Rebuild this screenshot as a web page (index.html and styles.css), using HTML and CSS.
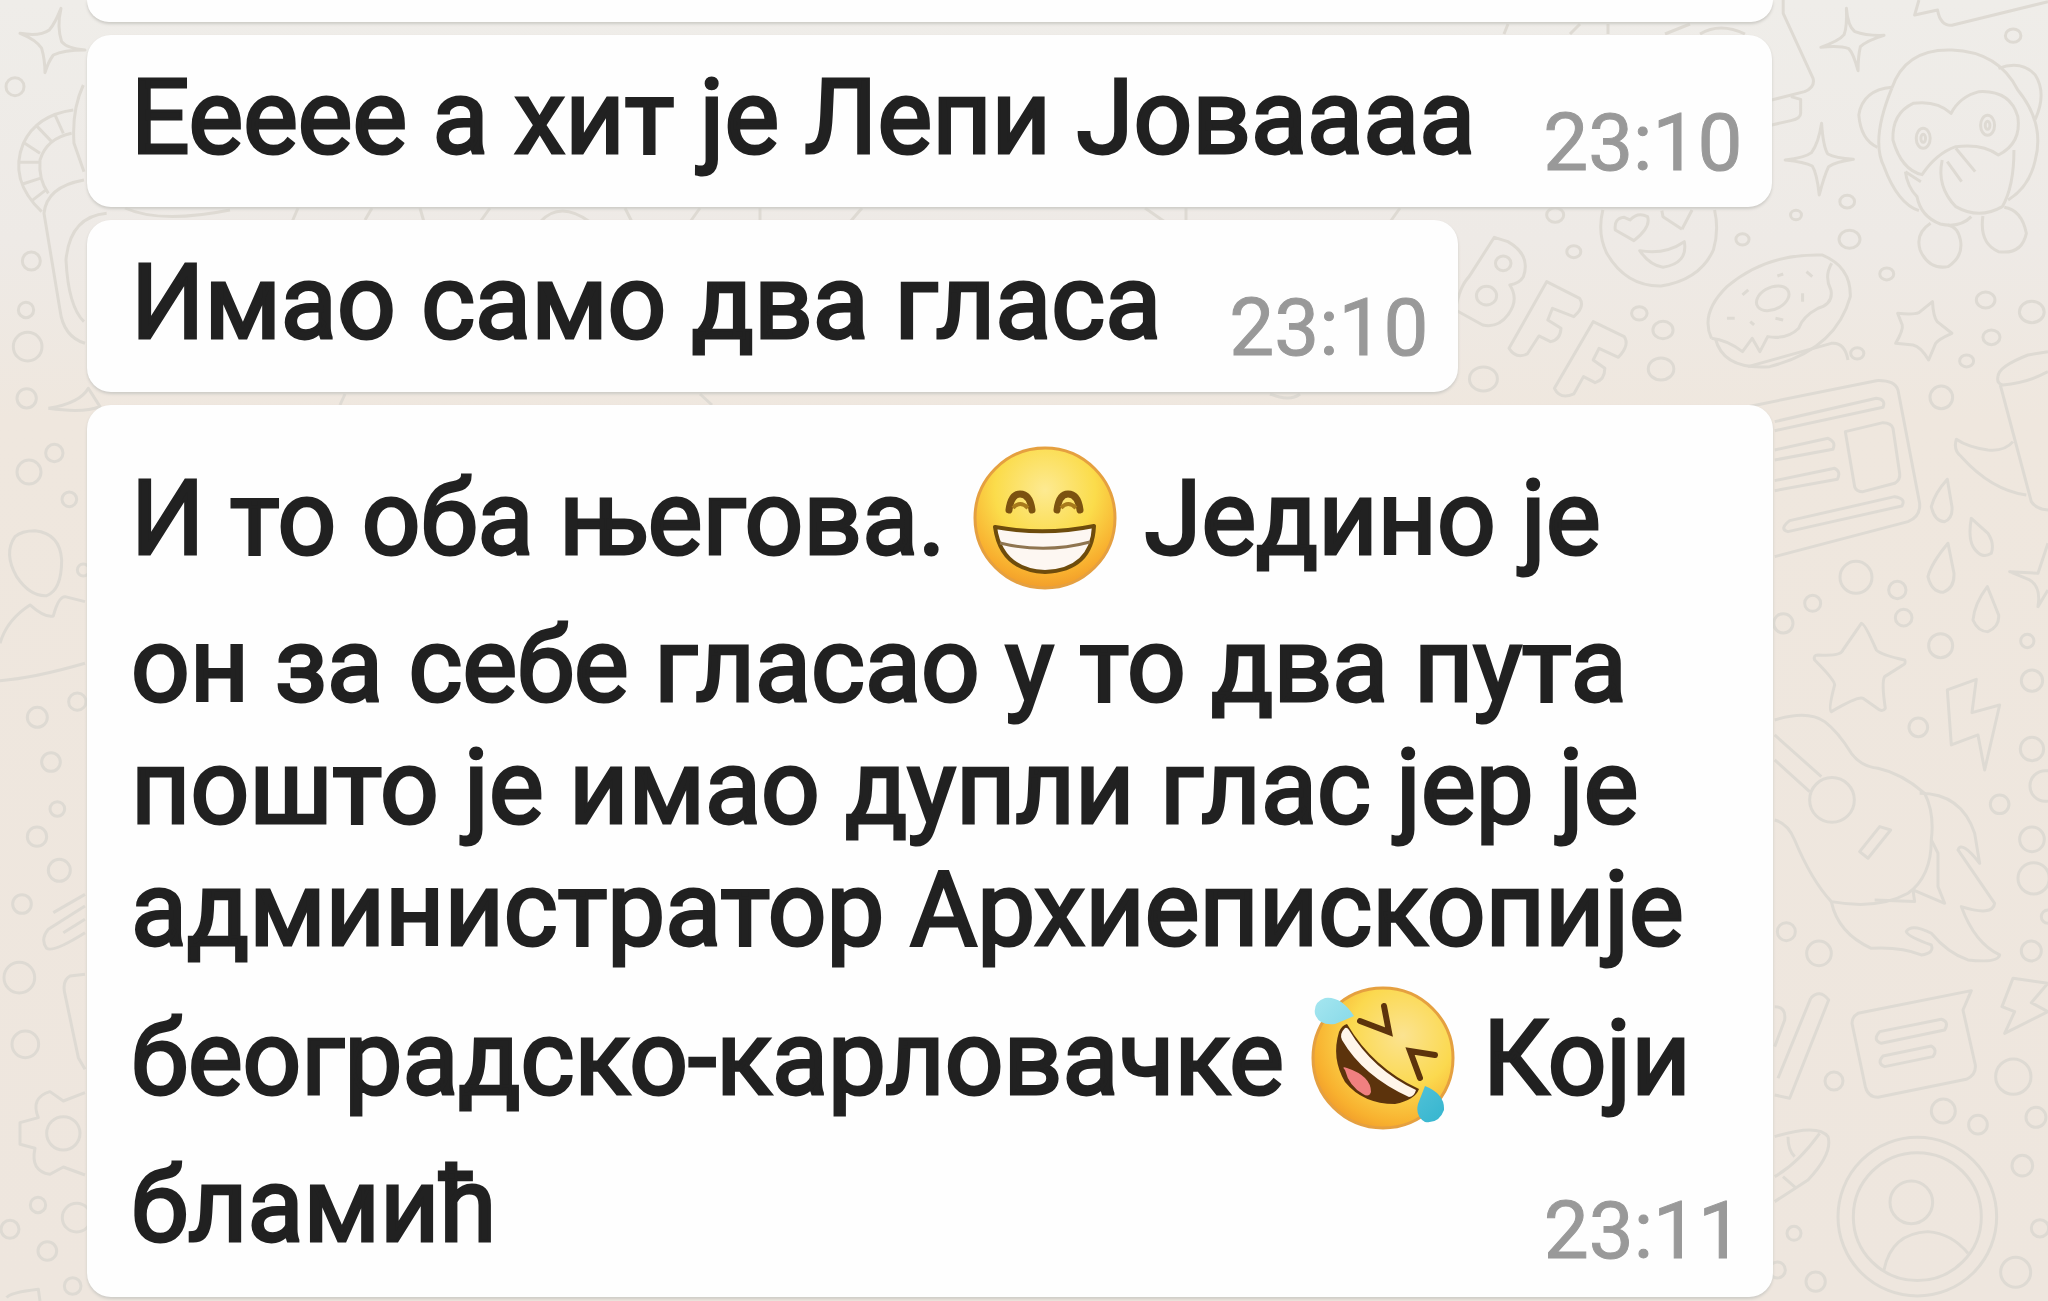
FILE: index.html
```html
<!DOCTYPE html>
<html lang="sr">
<head>
    <meta charset="UTF-8">
    <meta name="viewport" content="width=device-width, initial-scale=1.0">
    <title>Chat</title>
    <link rel="stylesheet" href="styles.css">
</head>
<body>
    <svg class="wallpaper" viewBox="0 0 2048 1301" preserveAspectRatio="xMaxYMin slice" aria-hidden="true">
        <!-- top right: stars, monkey, face, letters, donut -->
        <g transform="translate(1440 0) scale(.3878 .3333)">
            <path d="M885 0V40L962 235Q968 262 940 275L855 300M905 290L930 298V340Q930 356 905 362L855 375"/>
            <path d="M1048 25Q1052 80 1070 95Q1100 108 1145 106Q1100 122 1084 140Q1078 170 1078 212Q1066 160 1054 146Q1030 136 982 142Q1030 122 1042 104Q1050 80 1048 25Z"/>
            <path d="M984 370Q988 440 1000 462Q1020 474 1066 478Q1020 486 1002 500Q990 530 978 585Q972 520 960 498Q940 486 890 480Q940 474 958 458Q976 430 984 370Z"/>
            <path d="M1235 0L1224 45L1283 30Q1290 78 1320 76L1568 5"/>
            <path d="M1165 265Q1200 145 1320 150Q1440 155 1490 270Q1560 370 1535 480Q1520 560 1465 600M1165 265Q1110 420 1145 500Q1180 610 1235 632"/>
            <path d="M1165 262Q1090 270 1080 345Q1085 420 1128 442M1440 205Q1500 180 1535 225Q1565 280 1535 358"/>
            <path d="M1318 340Q1280 300 1220 310Q1165 340 1168 420Q1190 510 1243 524Q1280 460 1330 440Q1400 430 1440 465Q1500 430 1490 350Q1470 270 1390 275Q1340 290 1318 340Z"/>
            <ellipse cx="1246" cy="415" rx="18" ry="30"/><ellipse cx="1412" cy="376" rx="18" ry="30"/>
            <ellipse cx="1246" cy="415" rx="6" ry="12"/><ellipse cx="1412" cy="376" rx="6" ry="12"/>
            <path d="M1200 515Q1205 560 1230 590Q1240 650 1290 672Q1340 685 1370 650M1200 515L1240 545M1295 480Q1280 560 1330 620Q1390 660 1450 620Q1480 560 1480 450M1330 445L1380 515M1308 485L1345 545"/>
            <path d="M1265 670Q1225 700 1238 750Q1260 810 1310 800Q1350 770 1342 720Q1335 680 1310 675M1400 648Q1390 730 1440 755Q1500 765 1512 700Q1500 630 1455 622"/>
            <path d="M420 630Q405 700 430 760Q480 860 570 858Q670 840 705 750Q720 690 708 630"/>
            <path d="M500 722L452 690Q448 655 475 652L490 660Q510 635 535 650Q545 680 500 722ZM624 688L575 650L572 632M624 688L650 630M515 752Q580 765 630 725Q640 790 575 802Q540 795 515 752Z"/>
            <path d="M140 712L175 725Q235 765 215 830Q205 850 180 855Q205 900 175 945Q150 985 110 975L40 930Q50 860 75 830Z"/>
            <ellipse cx="163" cy="790" rx="20" ry="22"/><ellipse cx="120" cy="887" rx="26" ry="28"/>
            <path d="M275 845L360 895Q375 920 345 950L290 925L278 960L312 985Q310 1020 285 1025L255 1008L225 1062Q195 1078 178 1045Z"/>
            <path d="M395 965L475 1010Q490 1035 460 1072L410 1045L395 1080L425 1105Q425 1140 400 1148L370 1130L345 1182Q310 1200 295 1165Z"/>
            <path d="M700 1015Q670 940 740 860Q840 760 985 765Q1060 800 1058 890Q1020 1050 850 1100Q730 1110 710 1015"/>
            <path d="M1010 790Q990 830 1008 870Q1015 910 975 925Q935 950 925 985Q895 1020 845 1010L825 1055L805 1015L780 1055Q740 1020 700 1015"/>
            <ellipse cx="858" cy="895" rx="46" ry="32" transform="rotate(-35 858 895)"/>
            <path d="M780 885L795 870M870 828L885 822M945 815L960 830M935 880V905M865 955L885 960M740 955H760M800 965L810 975"/>
            <path d="M1270 905Q1272 950 1282 965L1320 1000Q1285 1018 1278 1030L1260 1080Q1240 1040 1220 1035L1175 1030Q1195 990 1192 975L1180 940Q1220 945 1235 938Z"/>
            <circle cx="1478" cy="107" r="20"/><circle cx="1050" cy="605" r="19"/><circle cx="918" cy="645" r="14"/>
            <circle cx="1056" cy="718" r="27"/><circle cx="780" cy="718" r="17"/><circle cx="345" cy="755" r="18"/>
            <circle cx="1152" cy="822" r="18"/><circle cx="1407" cy="900" r="24"/><circle cx="1422" cy="1012" r="22"/>
            <circle cx="1526" cy="936" r="32"/><circle cx="1358" cy="1083" r="18"/><circle cx="1076" cy="1060" r="17"/>
            <circle cx="514" cy="940" r="20"/><circle cx="575" cy="990" r="26"/><circle cx="570" cy="1107" r="33"/>
            <circle cx="112" cy="1137" r="36"/><circle cx="297" cy="645" r="22"/>
        </g>
        <!-- right middle: newspaper, cup, drops, star, bolt, guitar -->
        <g transform="translate(1748 360) scale(.3333)">
            <path d="M0 140L385 62Q440 60 450 90L515 430Q518 470 480 485L80 590M0 20L250 -50Q290 -55 300 0"/>
            <path d="M80 185L385 115Q415 118 405 142L80 212M80 270L240 235Q265 245 255 268L80 300M80 362L260 325Q280 335 268 358L80 392M125 482L440 410Q475 415 462 438L120 515Q92 508 125 482Z"/>
            <path d="M292 215L405 188Q430 188 435 205L455 340Q458 360 440 370L345 395Q325 395 320 380Z"/>
            <path d="M750 50Q750 20 840 -15L900 -25M750 50Q745 70 765 75Q840 68 900 35M757 75L850 425Q865 448 900 450M795 245Q770 275 720 270Q660 262 625 238Q615 270 640 290Q730 390 835 405"/>
            <path d="M598 358Q560 400 550 440Q560 485 590 485Q615 475 612 440ZM670 475Q660 530 675 560Q700 600 730 580Q740 550 720 520ZM600 550Q550 610 540 650Q550 695 585 697Q620 685 618 640ZM718 680Q680 730 675 780Q690 815 720 815Q755 800 752 765Z"/>
            <path d="M340 790Q350 790 385 870Q400 885 470 900Q475 910 465 915L410 950Q400 965 412 1045Q405 1055 395 1050L345 1015Q330 1008 250 1055Q240 1050 260 975Q260 960 200 900Q195 885 210 885Q280 890 285 870Z"/>
            <path d="M598 990L685 958L672 1058L755 1035L710 1230L690 1125L610 1155ZM900 550L870 640L785 635L845 660Q880 680 870 740L900 690"/>
            <path d="M80 1080Q180 1050 230 1085Q270 1115 310 1180Q340 1220 390 1225Q460 1240 530 1300Q560 1360 550 1440Q550 1550 480 1600Q390 1650 250 1625Q190 1560 140 1440Q120 1390 80 1380"/>
            <path d="M80 1125L220 1250M80 1200L185 1295M515 1300Q640 1300 680 1420L695 1510Q640 1440 630 1470L740 1630Q735 1670 640 1640Q680 1750 755 1785Q750 1810 660 1800Q600 1780 550 1720Q490 1690 475 1715Q480 1730 550 1755Q560 1780 520 1785Q460 1760 370 1765Q270 1720 250 1625"/>
            <path d="M380 1620L500 1625L495 1590L590 1630L570 1580V1480L550 1440M395 1400L428 1410L360 1495L335 1475Z"/>
            <circle cx="252" cy="1320" r="67"/><circle cx="580" cy="112" r="34"/>
            <circle cx="324" cy="652" r="48"/><circle cx="448" cy="690" r="26"/><circle cx="467" cy="773" r="25"/>
            <circle cx="194" cy="730" r="24"/><circle cx="106" cy="790" r="29"/><circle cx="578" cy="857" r="36"/>
            <circle cx="838" cy="843" r="20"/><circle cx="852" cy="962" r="32"/><circle cx="511" cy="1102" r="28"/>
            <circle cx="852" cy="1167" r="35"/><circle cx="892" cy="1278" r="46"/><circle cx="755" cy="1333" r="28"/>
        </g>
        <!-- right bottom: chat card, bolt, contact badge -->
        <g transform="translate(1748 820) scale(.3333)">
            <path d="M330 580L670 512L645 570L682 735Q685 765 655 778L390 832Q360 832 352 800L312 610Q312 590 330 580Z"/>
            <path d="M395 635L580 598Q605 605 590 630L400 670Q372 660 395 635ZM405 708L550 678Q570 690 555 710L410 740Q385 730 405 708Z"/>
            <path d="M795 475L900 490L850 548L900 575L770 640L800 575L762 560ZM188 535Q215 505 242 540L125 835L80 825M188 535L90 775M80 560Q115 560 110 600L80 680"/>
            <path d="M80 950Q210 910 240 950Q255 1000 180 1080L80 1145M215 940Q150 1030 80 1070M120 950Q120 990 140 1010M105 1070L145 1105"/>
            <circle cx="508" cy="1190" r="238"/><circle cx="508" cy="1190" r="192"/><circle cx="490" cy="1147" r="64"/>
            <path d="M408 1350Q430 1240 540 1235Q610 1240 660 1300"/>
            <circle cx="115" cy="335" r="27"/><circle cx="213" cy="400" r="37"/><circle cx="258" cy="783" r="27"/>
            <circle cx="852" cy="58" r="37"/><circle cx="857" cy="175" r="47"/><circle cx="900" cy="290" r="20"/>
            <circle cx="850" cy="393" r="30"/><circle cx="796" cy="770" r="53"/><circle cx="864" cy="892" r="30"/>
            <circle cx="586" cy="873" r="36"/><circle cx="690" cy="914" r="28"/><circle cx="823" cy="1037" r="31"/>
            <circle cx="876" cy="1225" r="26"/><circle cx="803" cy="1357" r="45"/><circle cx="138" cy="1240" r="21"/>
            <circle cx="203" cy="1385" r="29"/><circle cx="88" cy="1350" r="24"/>
        </g>
        <!-- left edge -->
        <g transform="scale(.3333)">
            <path d="M183 25Q170 80 185 125Q200 145 255 150Q190 150 160 165Q145 185 135 218Q135 180 125 145Q110 120 60 100Q120 110 148 90Q165 70 183 25Z"/>
            <path d="M220 330Q110 345 70 430Q25 540 125 635M215 400Q140 415 120 480Q115 540 145 580M165 345L190 400M112 380L155 425M72 428L120 460M52 487H118M68 552L120 535M92 605L135 572"/>
            <path d="M250 255Q215 330 222 430L252 515M252 540Q140 560 132 640L180 930Q190 1010 255 1030M320 640Q210 650 198 780Q205 920 252 965M145 1225Q240 1210 265 1165L300 1220Q250 1240 145 1225"/>
            <circle cx="45" cy="260" r="27"/><circle cx="94" cy="783" r="27"/><circle cx="78" cy="930" r="23"/>
            <circle cx="83" cy="1040" r="43"/><circle cx="80" cy="1195" r="29"/>
        </g>
        <g transform="translate(0 430) scale(.3333)">
            <path d="M105 302Q180 310 185 390Q185 480 140 497Q90 500 50 440Q10 370 45 320Q65 302 105 302Z"/>
            <path d="M0 640Q20 570 90 525Q135 565 160 558Q175 500 195 500L255 515M0 752Q100 745 255 700"/>
            <circle cx="87" cy="126" r="36"/><circle cx="163" cy="69" r="26"/><circle cx="208" cy="208" r="22"/>
            <circle cx="250" cy="420" r="18"/><circle cx="232" cy="815" r="26"/><circle cx="112" cy="862" r="30"/>
            <circle cx="153" cy="996" r="28"/><circle cx="172" cy="1137" r="22"/><circle cx="111" cy="1220" r="29"/>
        </g>
        <g transform="translate(0 861) scale(.3333)">
            <path d="M255 100L160 155M255 135L145 205Q120 235 140 262Q160 275 255 215M190 215L255 175M255 340L210 345Q185 360 195 400L235 590L255 625"/>
            <path d="M255 695L190 720L150 692Q90 710 115 770L60 785V850L105 862Q90 930 150 940L190 918L255 942"/>
            <path d="M20 1310Q30 1295 115 1285L120 1320"/>
            <circle cx="190" cy="817" r="50"/><circle cx="178" cy="28" r="33"/><circle cx="66" cy="129" r="28"/>
            <circle cx="58" cy="350" r="46"/><circle cx="76" cy="550" r="40"/><circle cx="114" cy="1032" r="23"/>
            <circle cx="230" cy="1070" r="43"/><circle cx="30" cy="1105" r="27"/><circle cx="142" cy="1170" r="28"/>
            <circle cx="218" cy="1275" r="25"/>
        </g>
        <!-- bits that show between the bubbles -->
        <path d="M125 208Q160 224 230 210M298 208L292 222M365 220L372 208M420 208L424 222M490 208L480 222M540 222Q560 200 590 222M625 208L632 222M690 222L700 208M760 208V222M850 222L862 208M1145 208L1165 222M1186 208V222M1390 222L1400 208M1508 24L1504 34M1570 34L1580 24M1608 24V34M1665 34L1690 24M1700 34Q1720 22 1745 34M345 394L340 405M700 394L712 405M1270 394Q1290 402 1300 394"/>
    </svg>

    <main class="chat">
        <div class="bubble bubble-cut"></div>

        <article class="bubble">
            <p class="text">Еееее а хит је Лепи Јоваааа</p>
            <time class="time">23:10</time>
        </article>

        <article class="bubble">
            <p class="text">Имао само два гласа</p>
            <time class="time">23:10</time>
        </article>

        <article class="bubble bubble-long">
            <p class="text">И то оба његова.
                <svg class="emoji" viewBox="0 0 144 144" role="img" aria-label="😁">
                    <defs>
                        <radialGradient id="face" cx=".5" cy=".3" r=".72">
                            <stop offset="0" stop-color="#fdea92"/>
                            <stop offset=".5" stop-color="#fbdc4b"/>
                            <stop offset=".85" stop-color="#f8ae2e"/>
                            <stop offset="1" stop-color="#f09a2a"/>
                        </radialGradient>
                    </defs>
                    <circle cx="72" cy="72" r="70" fill="url(#face)" stroke="#e5a040" stroke-width="3"/>
                    <path d="M36 64Q38 48 47 48Q57 48 59 64M84 64Q86 48 95 48Q105 48 107 64" fill="none" stroke="#7c5210" stroke-width="7" stroke-linecap="round"/>
                    <path d="M40 62Q47 54 55 62M88 62Q95 54 103 62" fill="none" stroke="#a87a1c" stroke-width="4"/>
                    <path d="M22 81Q72 90 121 80Q119 124 72 126Q28 124 22 81Z" fill="#fdf7f2" stroke="#6e4c0c" stroke-width="4" stroke-linejoin="round"/>
                    <path d="M27 97Q72 108 117 96" fill="none" stroke="#8f7550" stroke-width="3"/>
                </svg>
                Једино је он за себе гласао у то два пута пошто је имао дупли глас јер је администратор Архиепископије београдско-карловачке
                <svg class="emoji" viewBox="0 0 144 144" role="img" aria-label="🤣">
                    <defs>
                        <radialGradient id="laugh" cx=".64" cy=".34" r=".74">
                            <stop offset="0" stop-color="#fbe391"/>
                            <stop offset=".5" stop-color="#fbd94f"/>
                            <stop offset=".85" stop-color="#f8b12f"/>
                            <stop offset="1" stop-color="#f09a2a"/>
                        </radialGradient>
                        <linearGradient id="tear" x1="0" y1="0" x2="1" y2="1">
                            <stop offset="0" stop-color="#a5e6f0"/>
                            <stop offset="1" stop-color="#35b5cf"/>
                        </linearGradient>
                    </defs>
                    <circle cx="72" cy="72" r="70" fill="url(#laugh)" stroke="#e5a040" stroke-width="3"/>
                    <path d="M36 38Q62 82 108 103Q104 114 84 118Q52 118 34 96Q20 72 28 46Q31 39 36 38Z" fill="#5c330c"/>
                    <path d="M34 42Q28 48 31 54Q52 90 98 111Q103 111 105 104Q62 84 38 44Q36 41 34 42Z" fill="#fff5ea"/>
                    <path d="M34 84Q30 80 36 82Q60 90 60 106Q58 112 52 108Q38 100 34 84Z" fill="#f08080"/>
                    <path d="M73 20L78 46L49 35M124 69L99 65L109 92" fill="none" stroke="#5c330c" stroke-width="6" stroke-linejoin="miter" stroke-linecap="round"/>
                    <path d="M43 30Q30 10 14 12Q2 16 4 28Q8 40 24 38Q34 34 43 30ZM114 100Q134 108 133 124Q128 138 114 136Q104 130 107 118Z" fill="url(#tear)"/>
                </svg>
                Који бламић</p>
            <time class="time">23:11</time>
        </article>
    </main>
</body>
</html>
```
FILE: styles.css
```css
* {
    box-sizing: border-box;
}

body {
    margin: 0;
    min-height: 100vh;
    position: relative;
    overflow: hidden;
    font-family: Roboto, "Noto Sans", sans-serif;
    background: linear-gradient(#efede9 0, #eeeae6 240px, #efe7de 420px, #eee6de 100%);
}

/* doodles behind the messages */
.wallpaper {
    position: absolute;
    top: 0;
    left: 0;
    width: 100%;
    height: 100%;
    fill: none;
    stroke: #dedad3;
    stroke-width: 3px;
    stroke-linejoin: round;
}

.wallpaper * {
    vector-effect: non-scaling-stroke;
}

.chat {
    position: relative;
    display: flex;
    flex-direction: column;
    align-items: flex-start;
    gap: 13px;
    padding: 0 275px 0 87px;
}

.bubble {
    display: flex;
    align-items: flex-end;
    gap: 68px;
    padding: 22px 30px 24px 44px;
    background-color: #fefefe;
    border-radius: 24px;
    box-shadow: 0 2px 3px #cdcbc6;
}

.bubble-cut {
    width: 100%;
    height: 22px;
    padding: 0;
    border-radius: 0 0 24px 24px;
}

.bubble-long {
    display: grid;
    width: 100%;
    padding: 26px 30px 26px 44px;
}

.text {
    margin: 0;
    padding-bottom: 4px;
    font-size: 103px;
    line-height: 122px;
    white-space: nowrap;
    color: #212121;
    -webkit-text-stroke: 3px #212121;
}

.time {
    font-size: 80px;
    line-height: 80px;
    color: #999;
    -webkit-text-stroke: 1px #999;
}

.bubble-long .text,
.bubble-long .time {
    grid-area: 1 / 1;
}

.bubble-long .text {
    padding-right: 40px;
    white-space: normal;
}

.bubble-long .time {
    align-self: end;
    justify-self: end;
}

.emoji {
    width: 144px;
    height: 144px;
    margin: 15px 2px;
    vertical-align: -51px;
}
```
